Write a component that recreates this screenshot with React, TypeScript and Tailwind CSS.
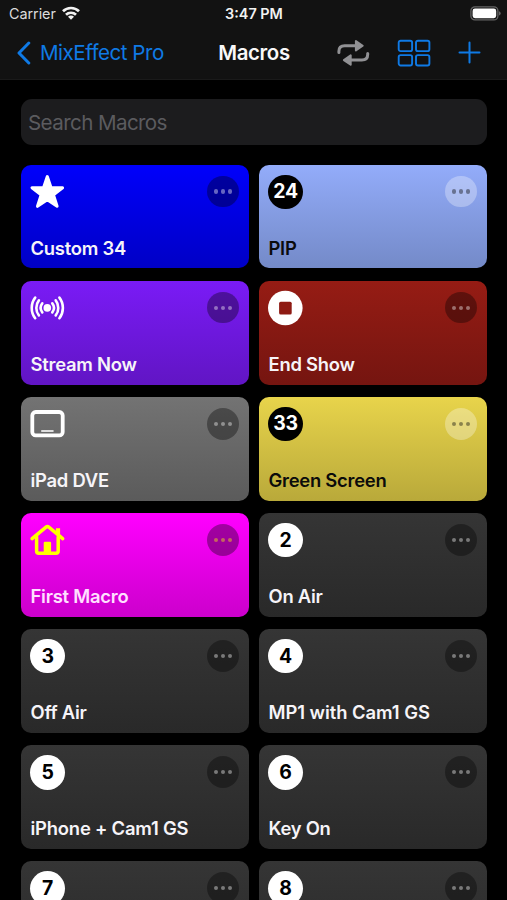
import React, { useState } from 'react';

type IconName = 'star' | 'broadcast' | 'stop' | 'ipad' | 'house';

interface Macro {
  id: number;
  name: string;
  bg: string;
  tracking?: string;
  icon?: IconName;
  badge?: string;
  light?: boolean;
  tint?: string;
  text?: string;
}

const GRAY = 'bg-linear-to-b from-[#353535] to-[#292929]';

const macros: Macro[] = [
  { id: 34, name: 'Custom 34', bg: 'bg-linear-to-b from-[#0000fb] to-[#0000c6]', icon: 'star' },
  { id: 24, name: 'PIP', bg: 'bg-linear-to-b from-[#93acfa] to-[#748ac8]', badge: '24', light: true },
  { id: 10, name: 'Stream Now', bg: 'bg-linear-to-b from-[#7a1bf6] to-[#6115c4]', icon: 'broadcast' },
  { id: 11, name: 'End Show', bg: 'bg-linear-to-b from-[#961c14] to-[#751510]', icon: 'stop' },
  { id: 12, name: 'iPad DVE', bg: 'bg-linear-to-b from-[#737373] to-[#5b5b5b]', icon: 'ipad' },
  { id: 33, name: 'Green Screen', bg: 'bg-linear-to-b from-[#e8d44b] to-[#b9a93a]', badge: '33', light: true },
  { id: 1, name: 'First Macro', bg: 'bg-linear-to-b from-[#ff00ff] to-[#cc00cc]', icon: 'house', tint: 'text-[#ffff00]', text: 'text-[#ffe0ff]' },
  { id: 2, name: 'On Air', bg: GRAY, badge: '2' },
  { id: 3, name: 'Off Air', bg: GRAY, badge: '3' },
  { id: 4, name: 'MP1 with Cam1 GS', tracking: 'tracking-[-0.04px]', bg: GRAY, badge: '4' },
  { id: 5, name: 'iPhone + Cam1 GS', tracking: 'tracking-[-0.2px]', bg: GRAY, badge: '5' },
  { id: 6, name: 'Key On', bg: GRAY, badge: '6' },
  { id: 7, name: '', bg: GRAY, badge: '7' },
  { id: 8, name: '', bg: GRAY, badge: '8' },
];

const MacroIcon = ({ name }: { name: IconName }) => {
  switch (name) {
    case 'star':
      return (
        <path
          d="M17 1.6 20.7 12.4 32.3 12.7 23.2 19.9 26.8 31.3 17 24.7 7.2 31.3 10.8 19.9 1.7 12.7 13.3 12.4Z"
          fill="currentColor"
          stroke="currentColor"
          strokeWidth="3"
          strokeLinejoin="round"
        />
      );
    case 'broadcast':
      return (
        <g fill="none" stroke="currentColor" strokeWidth="2.6" strokeLinecap="round">
          <circle cx="17" cy="16.9" r="3.8" fill="currentColor" stroke="none" />
          <path d="M12 12.4a7.4 7.4 0 0 0 0 9M22 12.4a7.4 7.4 0 0 1 0 9" />
          <path d="M8.6 9.4a12.2 12.2 0 0 0 0 15M25.4 9.4a12.2 12.2 0 0 1 0 15" />
          <path d="M4.9 6.6a17 17 0 0 0 0 20.6M29.1 6.6a17 17 0 0 1 0 20.6" />
        </g>
      );
    case 'stop':
      return (
        <>
          <circle cx="17" cy="17" r="17.3" fill="currentColor" />
          <rect x="10.8" y="10.7" width="12.6" height="12.8" rx="1.6" fill="#8e1a13" />
        </>
      );
    case 'ipad':
      return (
        <>
          <rect x="2" y="5" width="30.4" height="23.4" rx="3.4" fill="none" stroke="currentColor" strokeWidth="3.8" />
          <rect x="10.7" y="23" width="12.8" height="1.9" rx="0.9" fill="#dedede" />
        </>
      );
    case 'house':
      return (
        <g fill="none" stroke="currentColor" strokeWidth="3.5" strokeLinecap="round" strokeLinejoin="round">
          <path d="M1.8 15.6 15.7 4.2q1.4-1.1 2.8 0L32.4 15.6" />
          <path d="M6.3 14V28q0 2.2 2.2 2.2H25.7q2.2 0 2.2-2.2V14" />
          <path d="M25.6 5.2h4.2V14L25.6 10.2Z" fill="currentColor" stroke="none" />
          <path d="M14.6 18.8h5q1.2 0 1.2 1.2V30H13.4V20q0-1.2 1.2-1.2Z" fill="currentColor" stroke="none" />
        </g>
      );
  }
};

const MacroCard = ({ macro }: { macro: Macro }) => (
  <div className={`h-[103.7px] rounded-[10px] pl-[10px] pr-[9.8px] pt-[9.8px] flex flex-col ${macro.bg}`}>
    <div className="h-[34.6px] flex justify-between">
      {macro.badge ? (
        <div
          className={`-ml-[0.3px] size-[34.6px] rounded-full flex items-center justify-center text-[19.4px] font-bold tracking-[-0.3px] ${
            macro.light ? 'bg-black text-white' : 'bg-white text-black'
          }`}
        >
          {macro.badge}
        </div>
      ) : (
        <svg viewBox="-0.3 0 34 34" className={`-ml-[0.3px] size-[34px] overflow-visible ${macro.tint ?? 'text-white'}`}>
          {macro.icon && <MacroIcon name={macro.icon} />}
        </svg>
      )}
      <button
        className={`mt-[1.4px] size-[31.4px] rounded-full flex items-center justify-center gap-[2.6px] ${
          macro.light ? 'bg-white/30 text-black' : `bg-black/35 ${macro.tint ?? 'text-white'}`
        }`}
      >
        <span className="size-[4.4px] rounded-full bg-current opacity-40" />
        <span className="size-[4.4px] rounded-full bg-current opacity-40" />
        <span className="size-[4.4px] rounded-full bg-current opacity-40" />
      </button>
    </div>
    <p
      className={`mt-[25.5px] text-[18.4px] leading-[26px] font-semibold whitespace-nowrap ${macro.tracking ?? 'tracking-[-0.24px]'} ${
        macro.light ? 'text-[#0b0b0b]' : macro.text ?? 'text-[#f6f4f8]'
      }`}
    >
      {macro.name}
    </p>
  </div>
);

const StatusBar = () => (
  <div className="h-[27px] pl-[9px] pr-[6px] grid grid-cols-3 items-center text-[#f2f2f2]">
    <div className="flex items-center gap-[6px]">
      <span className="text-[14.4px] tracking-[-0.05px] text-[#dcdcdc]">Carrier</span>
      <svg viewBox="0 0 18 14" className="w-[18px] h-[14px]" fill="none" stroke="currentColor" strokeWidth="2.7">
        <path d="M1 5.3a11.4 11.4 0 0 1 16 0" />
        <path d="M4 8.8a7.1 7.1 0 0 1 10 0" />
        <path d="M9 13.7 6 10.8a4.2 4.2 0 0 1 6 0Z" fill="currentColor" stroke="none" />
      </svg>
    </div>
    <span className="pr-[2px] text-center text-[14.4px] font-semibold">3:47 PM</span>
    <svg viewBox="0 0 31 15" className="w-[31px] h-[15px] justify-self-end">
      <rect x="0.9" y="0.9" width="27" height="13" rx="4" fill="none" stroke="#646464" strokeWidth="1.3" />
      <rect x="2.6" y="2.6" width="23.6" height="9.6" rx="2.4" fill="#fff" />
      <path d="M29 5.2q1.7.6 1.7 2.2t-1.7 2.2Z" fill="#646464" />
    </svg>
  </div>
);

const NavBar = () => (
  <div className="h-[52px] pl-[17px] pr-[26.5px] grid grid-cols-[190px_94px_1fr] items-center">
    <button className="flex items-center gap-[9px] text-[#0f7ae5]">
      <svg viewBox="0 0 14 24" className="w-[14px] h-[24px]" fill="none" stroke="currentColor" strokeWidth="3" strokeLinecap="round" strokeLinejoin="round">
        <path d="M11.8 2 2 12l9.8 10" />
      </svg>
      <span className="text-[20.6px] tracking-[-0.5px] whitespace-nowrap">MixEffect Pro</span>
    </button>
    <h1 className="text-center text-[20.4px] font-semibold text-[#f8f8f8] tracking-[-0.35px]">Macros</h1>
    <div className="flex items-center justify-end gap-[28px]">
      <svg viewBox="0.7 0.2 32 27" className="w-[32px] h-[27px] overflow-visible text-[#919194]" fill="none" stroke="currentColor" strokeWidth="3" strokeLinecap="round">
        <path d="M1.6 12.6V11.4Q1.6 5.9 7.4 5.9H19" />
        <path d="M30.4 13.6v1.2q0 5.5-5.8 5.5H13" />
        <path d="M18.6 1.2v9.4l6.8-4.7ZM13.4 15.6v9.4L6.6 20.3Z" fill="currentColor" strokeWidth="2" strokeLinejoin="round" />
      </svg>
      <svg viewBox="0.4 0.3 33 27" className="w-[33px] h-[27px] overflow-visible text-[#0f7ae5]" fill="none" stroke="currentColor" strokeWidth="1.9">
        <rect x="1.1" y="1" width="13.4" height="10.4" rx="1.9" />
        <rect x="18.4" y="1" width="13.4" height="10.4" rx="1.9" />
        <rect x="1.1" y="15.4" width="13.4" height="10.4" rx="1.9" />
        <rect x="18.4" y="15.4" width="13.4" height="10.4" rx="1.9" />
      </svg>
      <svg viewBox="0.5 0.4 22 22" className="w-[22px] h-[22px] overflow-visible text-[#0f7ae5]" fill="none" stroke="currentColor" strokeWidth="2" strokeLinecap="round">
        <path d="M11 1v20M1 11h20" />
      </svg>
    </div>
  </div>
);

const App = () => {
  const [search, setSearch] = useState('');

  const filtered = macros.filter(m => m.name.toLowerCase().includes(search.toLowerCase()));

  return (
    <div className="h-[900px] w-[507px] overflow-hidden bg-black font-[Inter,'Liberation_Sans',sans-serif]">
      <header className="h-[80px] bg-[#121212] border-b border-[#1a1a1a]">
        <StatusBar />
        <NavBar />
      </header>

      <main className="px-[20.5px] pt-[18.6px]">
        <input
          type="text"
          placeholder="Search Macros"
          className="block w-full h-[46.4px] rounded-[11px] bg-[#1c1c1e] px-[7.5px] pt-[2px] text-[20.6px] tracking-[-0.6px] text-white placeholder:text-[#5b5b5f] outline-none"
          value={search}
          onChange={(e) => setSearch(e.target.value)}
        />

        <div className="mt-[19.8px] grid grid-cols-2 gap-x-[10px] gap-y-[12.4px]">
          {filtered.map(macro => (
            <MacroCard key={macro.id} macro={macro} />
          ))}
        </div>
      </main>
    </div>
  );
};

export default App;
